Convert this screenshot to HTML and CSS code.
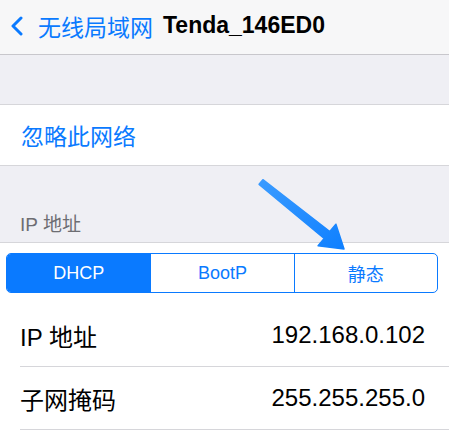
FILE: index.html
```html
<!DOCTYPE html>
<html lang="zh-CN">
<head>
    <meta charset="UTF-8">
    <meta name="viewport" content="width=device-width, initial-scale=1.0">
    <title>Tenda_146ED0</title>
    <link rel="stylesheet" href="styles.css">
</head>
<body>
    <div class="screen">
        <header class="navbar">
            <svg class="back-icon" width="14" height="20" viewBox="0 0 14 20">
                <path d="M11 2 L3 10 L11 18" fill="none" stroke="#0a7aff" stroke-width="3" stroke-linecap="round" stroke-linejoin="round"/>
            </svg>
            <span class="back-label">无线局域网</span>
            <h1 class="nav-title">Tenda_146ED0</h1>
        </header>

        <div class="spacer"></div>

        <div class="cell-group">
            <div class="cell action">忽略此网络</div>
        </div>

        <div class="section-header">IP 地址</div>

        <div class="cell-group">
            <div class="segment-wrap">
                <div class="segmented">
                    <div class="segment active">DHCP</div>
                    <div class="segment">BootP</div>
                    <div class="segment">静态</div>
                </div>
            </div>
            <div class="row">
                <span class="row-label">IP 地址</span>
                <span class="row-value">192.168.0.102</span>
            </div>
            <div class="row">
                <span class="row-label">子网掩码</span>
                <span class="row-value">255.255.255.0</span>
            </div>
            <div class="row">
                <span class="row-label">路由器</span>
                <span class="row-value">192.168.0.1</span>
            </div>
        </div>

        <!-- arrow drawn over the screenshot -->
        <svg class="arrow" width="449" height="448" viewBox="0 0 449 448">
            <defs>
                <linearGradient id="arrowFill" x1="0" y1="0" x2="1" y2="1">
                    <stop offset="0" stop-color="#3a9bff"/>
                    <stop offset="1" stop-color="#0f80ff"/>
                </linearGradient>
            </defs>
            <path d="M262.9 179.7 L329.8 231.5 L335.9 224.2 L344 249 L318.1 245.8 L324.2 238.5 L259.1 184.3 Z"
                  fill="url(#arrowFill)" stroke="url(#arrowFill)" stroke-width="1.5" stroke-linejoin="round"/>
        </svg>
    </div>
</body>
</html>
```

FILE: styles.css
```css
body {
    margin: 0;
    font-family: "Liberation Sans", "Noto Sans CJK SC", sans-serif;
    background-color: #efeff4;
    overflow: hidden;
}
.screen {
    position: relative;
    width: 449px;
    height: 448px;
    overflow: hidden;
}
.navbar {
    height: 55px;
    display: flex;
    align-items: center;
    padding: 0 0 3px 10px;
    box-sizing: border-box;
    background-color: #f7f7f8;
    border-bottom: 1px solid #c8c7cc;
}
.back-icon {
    margin-right: 14px;
}
.back-label {
    font-size: 23px;
    color: #0a7aff;
    margin-right: 10px;
}
.nav-title {
    margin: 0;
    font-size: 23px;
    font-weight: bold;
    color: #000;
}
.spacer {
    height: 49px;
}
.cell-group {
    background-color: #fff;
    border-top: 1px solid #d6d6da;
    border-bottom: 1px solid #d6d6da;
}
.cell {
    height: 60px;
    display: flex;
    align-items: center;
    padding-left: 21px;
    font-size: 23px;
}
.action {
    color: #0a7aff;
}
.section-header {
    height: 76px;
    box-sizing: border-box;
    padding: 0 0 6px 20px;
    display: flex;
    align-items: flex-end;
    font-size: 19px;
    color: #6d6d72;
}
.segment-wrap {
    padding: 10px 11px 11px 6px;
}
.segmented {
    display: grid;
    grid-template-columns: 1fr 1fr 1fr;
    height: 40px;
    box-sizing: border-box;
    border: 1.5px solid #0a7aff;
    border-radius: 5px;
    overflow: hidden;
}
.segment {
    display: flex;
    align-items: center;
    justify-content: center;
    font-size: 18px;
    color: #0a7aff;
    border-left: 1.5px solid #0a7aff;
}
.segment:first-child {
    border-left: none;
}
.segment.active {
    background-color: #0a7aff;
    color: #fff;
}
.row {
    height: 62px;
    margin-left: 20px;
    padding-right: 24px;
    display: flex;
    align-items: center;
    justify-content: space-between;
    border-bottom: 1px solid #d6d6da;
    font-size: 24px;
    color: #000;
}
.row:last-child {
    border-bottom: none;
}
.arrow {
    position: absolute;
    top: 0;
    left: 0;
    pointer-events: none;
}
```
